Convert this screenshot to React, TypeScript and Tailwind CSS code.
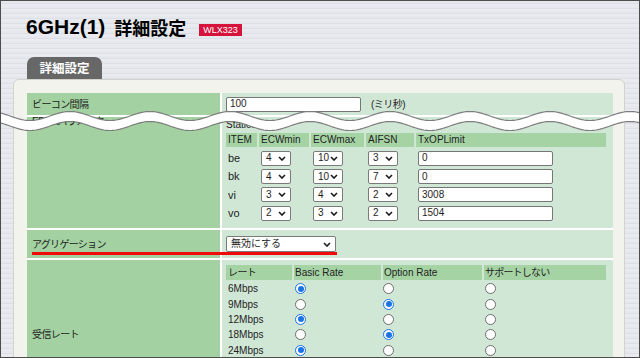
import React from 'react'

const edcaRows = [
  { item: 'be', min: '4', max: '10', aifsn: '3', txop: '0' },
  { item: 'bk', min: '4', max: '10', aifsn: '7', txop: '0' },
  { item: 'vi', min: '3', max: '4', aifsn: '2', txop: '3008' },
  { item: 'vo', min: '2', max: '3', aifsn: '2', txop: '1504' },
]

// 0 = Basic, 1 = Option, 2 = not supported
const rates = [
  { rate: '6Mbps', sel: 0 },
  { rate: '9Mbps', sel: 1 },
  { rate: '12Mbps', sel: 0 },
  { rate: '18Mbps', sel: 1 },
  { rate: '24Mbps', sel: 0 },
  { rate: '36Mbps', sel: 1 },
  { rate: '48Mbps', sel: 1 },
  { rate: '54Mbps', sel: 1 },
]

const Chevron = () => (
  <svg width="8" height="5" viewBox="0 0 8 5" className="shrink-0">
    <path d="M1 1 L4 4 L7 1" stroke="#1a1a1a" strokeWidth="1.6" fill="none" />
  </svg>
)

const Select = ({ value, className }: { value: string; className: string }) => (
  <div className={`flex items-center justify-between border border-[#7a7a7a] rounded-[2px] bg-white pl-[4px] pr-[4px] ${className}`}>
    <span className="leading-none">{value}</span>
    <Chevron />
  </div>
)

const TextBox = ({ value, className }: { value: string; className: string }) => (
  <div className={`flex items-center border border-[#767676] rounded-[2px] bg-white px-[3px] ${className}`}>
    <span className="leading-none">{value}</span>
  </div>
)

const Radio = ({ on }: { on: boolean }) =>
  on ? (
    <span className="w-[11px] h-[11px] rounded-full border-[1.5px] border-[#1a73e8] bg-white flex items-center justify-center">
      <span className="w-[6px] h-[6px] rounded-full bg-[#1a73e8]" />
    </span>
  ) : (
    <span className="w-[11px] h-[11px] rounded-full border border-[#6e6e6e] bg-white" />
  )

// wavy "cut" band drawn over the omitted part of the page
const Wave = () => {
  const phase = 10
  const pts: [number, number][] = []
  for (let x = -4; x <= 646; x += 2) {
    pts.push([x, 15 + 4.5 * Math.sin((2 * Math.PI * (x - phase)) / 80)])
  }
  const upper = pts.map((p, i) => `${i ? 'L' : 'M'}${p[0]},${p[1].toFixed(2)}`).join(' ')
  const lowerPts = pts.map(([x, y]) => [x, y + 10] as [number, number])
  const lower = lowerPts.map((p, i) => `${i ? 'L' : 'M'}${p[0]},${p[1].toFixed(2)}`).join(' ')
  const fill =
    upper +
    ' ' +
    [...lowerPts].reverse().map((p) => `L${p[0]},${p[1].toFixed(2)}`).join(' ') +
    ' Z'
  return (
    <svg className="absolute -left-[1px] top-[100px]" width="642" height="34" viewBox="0 0 642 34">
      <path d={fill} fill="#ffffff" />
      <path d={upper} fill="none" stroke="#7d7d7d" strokeWidth="1.2" />
      <path d={lower} fill="none" stroke="#7d7d7d" strokeWidth="1.2" />
    </svg>
  )
}

export default function App() {
  return (
    <div className="w-[640px] h-[358px] overflow-hidden relative border border-[#4d4d4d] bg-[repeating-linear-gradient(180deg,#e5e8ed_0px,#e5e8ed_2px,#dcdfe5_2px,#dcdfe5_3px,#e9ebf0_3px,#e9ebf0_5px)] text-[#1e1e1e] text-[10px] font-['Liberation_Sans','Noto_Sans_CJK_JP',sans-serif]">
      {/* Page title */}
      <div className="h-[56px] pl-[25px] pt-[13px] flex items-start">
        <h1 className="flex items-center h-[26px] font-bold text-black">
          <span className="text-[21px] font-['Liberation_Sans',sans-serif]">6GHz(1)</span>
          <span className="ml-[9px] text-[18px] font-['Noto_Sans_CJK_JP',sans-serif]">詳細設定</span>
        </h1>
        <span className="ml-[13px] mt-[10px] h-[12px] px-[4px] bg-[#d6133b] text-white text-[9px] leading-[12px]">
          WLX323
        </span>
      </div>

      {/* Tab */}
      <div className="ml-[26px] w-[75px] h-[22px] rounded-t-[7px] bg-[#676767] text-white font-bold text-[12.5px] flex items-center justify-center font-['Noto_Sans_CJK_JP',sans-serif]">
        詳細設定
      </div>

      {/* Panel */}
      <div className="ml-[12px] w-[612px] rounded-t-[6px] bg-[#f3f3ee] border border-[#d3d3cc] pt-[13px] pl-[13px] pr-[11px]">
        <div className="relative flex flex-col gap-[2px] bg-white">
          {/* Beacon interval */}
          <div className="flex gap-[2px] h-[22px]">
            <div className="w-[193px] bg-[#a3d1a1] pl-[5px] flex items-center tracking-[-0.6px]">ビーコン間隔</div>
            <div className="flex-1 bg-[#d1e7d6] pl-[4px] flex items-center">
              <TextBox value="100" className="w-[135px] h-[15px]" />
              <span className="ml-[10px] tracking-[-0.5px]">(ミリ秒)</span>
            </div>
          </div>

          {/* EDCA */}
          <div className="flex gap-[2px] h-[111px]">
            <div className="w-[193px] bg-[#a3d1a1] pl-[5px] leading-[10px] tracking-[-0.6px]">EDCAパラメーター</div>
            <div className="flex-1 bg-[#d1e7d6] pl-[4px] pt-[1px]">
              <div className="h-[13px] leading-[13px]">Station</div>
              <div className="mt-[2px] flex gap-[2px] h-[14px]">
                <div className="w-[31px] bg-[#a6d3a4] pl-[2px] leading-[14px]">ITEM</div>
                <div className="w-[50px] bg-[#a6d3a4] pl-[2px] leading-[14px]">ECWmin</div>
                <div className="w-[53px] bg-[#a6d3a4] pl-[2px] leading-[14px]">ECWmax</div>
                <div className="w-[48px] bg-[#a6d3a4] pl-[2px] leading-[14px]">AIFSN</div>
                <div className="w-[190px] bg-[#a6d3a4] pl-[2px] leading-[14px]">TxOPLimit</div>
              </div>
              <div className="mt-[2px]">
                {edcaRows.map((r) => (
                  <div key={r.item} className="flex gap-[2px] h-[18.4px] items-center">
                    <div className="w-[31px] pl-[2px] text-[11px]">{r.item}</div>
                    <div className="w-[50px] pl-[2px]">
                      <Select value={r.min} className="w-[30px] h-[15px]" />
                    </div>
                    <div className="w-[53px] pl-[2px]">
                      <Select value={r.max} className="w-[30px] h-[15px]" />
                    </div>
                    <div className="w-[48px] pl-[2px]">
                      <Select value={r.aifsn} className="w-[30px] h-[15px]" />
                    </div>
                    <div className="w-[190px] pl-[2px]">
                      <TextBox value={r.txop} className="w-[135px] h-[15px]" />
                    </div>
                  </div>
                ))}
              </div>
            </div>
          </div>

          {/* Aggregation */}
          <div className="flex gap-[2px] h-[28px]">
            <div className="w-[193px] bg-[#a3d1a1] pl-[5px] flex items-center tracking-[-0.7px]">アグリゲーション</div>
            <div className="flex-1 bg-[#d1e7d6] pl-[4px] flex items-center">
              <Select value="無効にする" className="w-[110px] h-[16px]" />
            </div>
          </div>

          {/* Receive rates */}
          <div className="flex gap-[2px] h-[148px]">
            <div className="w-[193px] bg-[#a3d1a1] pl-[5px] flex items-center tracking-[-0.6px]">受信レート</div>
            <div className="flex-1 bg-[#d1e7d6] pl-[4px] pt-[5px]">
              <div className="flex gap-[2px] h-[15px] leading-[15px]">
                <div className="w-[66px] bg-[#a6d3a4] pl-[2px] tracking-[-0.6px]">レート</div>
                <div className="w-[87px] bg-[#a6d3a4] pl-[1px]">Basic Rate</div>
                <div className="w-[99px] bg-[#a6d3a4] pl-[1px]">Option Rate</div>
                <div className="w-[122px] bg-[#a6d3a4] pl-[1px] tracking-[-0.8px]">サポートしない</div>
              </div>
              <div className="mt-[1px]">
                {rates.map((r) => (
                  <div key={r.rate} className="flex gap-[2px] h-[15.4px] items-center">
                    <div className="w-[66px] pl-[2px]">{r.rate}</div>
                    <div className="w-[87px] pl-[1px] flex">
                      <Radio on={r.sel === 0} />
                    </div>
                    <div className="w-[99px] pl-[0px] flex">
                      <Radio on={r.sel === 1} />
                    </div>
                    <div className="w-[122px] pl-[1px] flex">
                      <Radio on={r.sel === 2} />
                    </div>
                  </div>
                ))}
              </div>
            </div>
          </div>

          {/* highlight underline */}
          <div className="absolute left-[5px] top-[159px] w-[305px] h-[2.5px] bg-[#f00a0a]" />
        </div>
      </div>

      <Wave />
    </div>
  )
}
